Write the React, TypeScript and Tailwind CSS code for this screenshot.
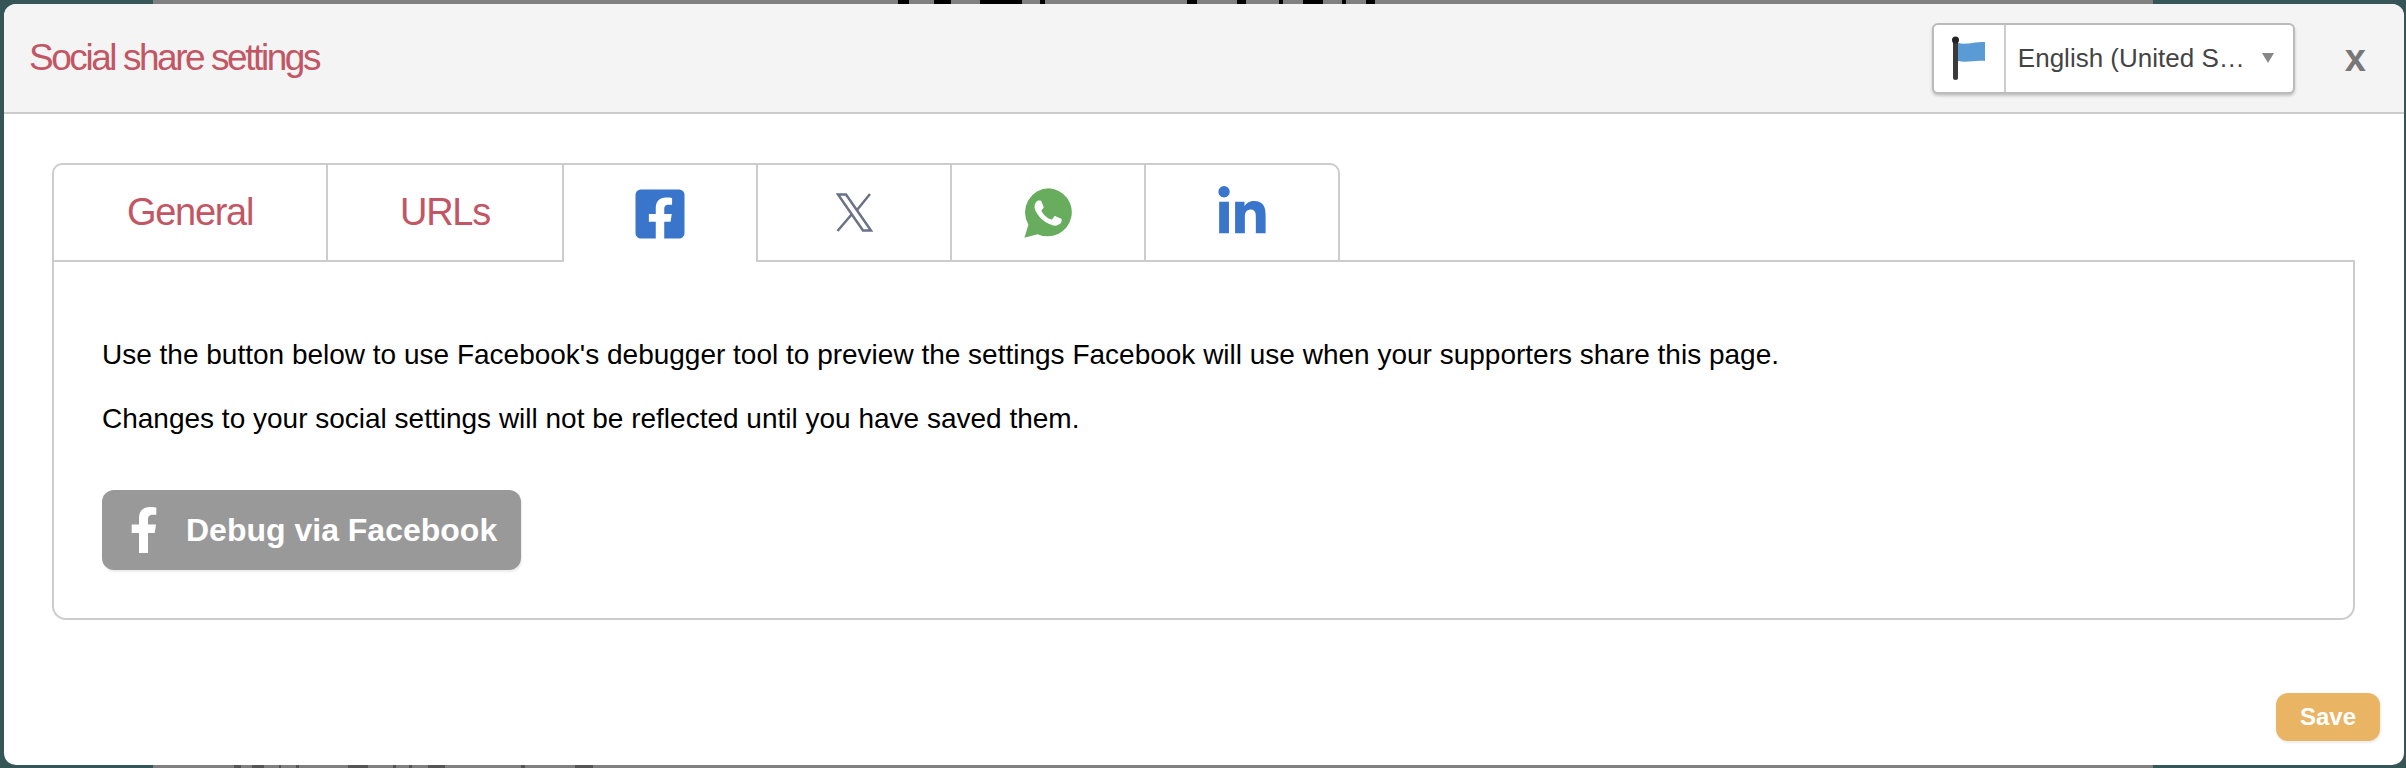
import { FaFacebookF, FaFacebookSquare, FaLinkedinIn } from 'react-icons/fa';

const arial = 'font-["Liberation_Sans",Arial,sans-serif]';

// slivers of the page text that show above and below the modal: [left, width]
const topBits = [[898, 11], [934, 17], [980, 42], [1040, 5], [1187, 10], [1237, 9], [1279, 4], [1303, 20], [1342, 4], [1366, 9]];
const bottomBits = [[234, 7], [252, 12], [279, 2], [296, 3], [348, 20], [393, 3], [409, 3], [428, 17], [521, 4], [575, 18]];

function Flag() {
  return (
    <svg width="34" height="44" viewBox="0 0 34 44">
      <path d="M6 7c8 2 15-1 27-1v19c-10-1-18 2-27 0z" fill="#5a9bd5" />
      <rect x="1" y="2" width="5" height="42" rx="2.5" fill="#3a3a3a" />
      <circle cx="3.5" cy="4" r="3.5" fill="#222" />
    </svg>
  );
}

function XLogo() {
  return (
    <svg width="37" height="39" viewBox="0 0 37 39" fill="none" stroke="#6b7287" strokeWidth="2.5">
      <path d="M2 1.5h8l25 36h-8z" />
      <path d="M34 1 21 17M1.500 38 16 21" />
    </svg>
  );
}

function WhatsappLogo() {
  return (
    <svg width="54" height="54" viewBox="0 0 24 24">
      <path d="M12.500 1a10.700 10.700 0 0 0-9.200 16.200L1.500 23l5.900-1.600A10.700 10.700 0 1 0 12.500 1z" fill="#68ad5e" />
      <path
        d="M17.470 14.380c-.3-.15-1.760-.87-2.030-.97-.27-.1-.47-.15-.67.15-.2.3-.77.97-.94 1.170-.17.2-.35.22-.64.07-.3-.15-1.260-.46-2.390-1.470-.88-.79-1.480-1.760-1.650-2.060-.17-.3-.02-.46.13-.6.13-.14.3-.35.45-.52.15-.17.2-.3.3-.5.1-.2.05-.37-.03-.52-.07-.15-.67-1.610-.92-2.210-.24-.58-.49-.5-.67-.51h-.57c-.2 0-.52.07-.79.37-.27.3-1.040 1.020-1.040 2.480 0 1.460 1.070 2.880 1.210 3.070.15.2 2.100 3.200 5.080 4.490.71.3 1.260.49 1.690.62.71.23 1.360.2 1.870.12.57-.09 1.760-.72 2.010-1.420.25-.7.25-1.290.17-1.410-.07-.13-.27-.2-.57-.35z"
        fill="#fff"
      />
    </svg>
  );
}

function Tab({ children, active, first, last }: { children: React.ReactNode; active?: boolean; first?: boolean; last?: boolean }) {
  return (
    <div
      className={
        'flex h-full items-center justify-center border-t-2 border-l-2 border-[#ccc] ' +
        (active ? '' : 'border-b-2 ') +
        (first ? 'rounded-tl-[10px] ' : '') +
        (last ? 'border-r-2 rounded-tr-[10px] ' : '')
      }
    >
      {children}
    </div>
  );
}

export default function App() {
  return (
    <div className={`relative h-[768px] w-full overflow-hidden bg-[#355557] pt-1 pb-[3px] pl-1 pr-[2px] ${arial}`}>
      {/* page behind the modal */}
      <div className="absolute inset-y-0 left-[153px] w-[2000px] bg-[#808080]" />
      {topBits.map(([left, width]) => (
        <div key={left} className="absolute top-0 h-1 bg-black" style={{ left, width }} />
      ))}
      {bottomBits.map(([left, width]) => (
        <div key={left} className="absolute bottom-0 h-[3px] bg-[#555]" style={{ left, width }} />
      ))}

      <div className="relative flex h-full flex-col overflow-hidden rounded-[12px] bg-white">
        <header className="flex h-[110px] shrink-0 items-center justify-between border-b-2 border-[#ccc] bg-[#f4f4f4] pl-[25px] pr-[38px]">
          <h1 className="text-[37px] tracking-[-2.45px] text-[#c25664]">Social share settings</h1>
          <div className="flex items-center">
            <div className="flex h-[71px] w-[363px] rounded-[6px] border-2 border-[#bbb] bg-white shadow-[0_2px_3px_rgba(0,0,0,0.2)]">
              <div className="flex w-[72px] items-center justify-center border-r-2 border-[#ccc]">
                <Flag />
              </div>
              <div className="flex flex-1 items-center justify-between pl-[12px] pr-[19px] text-[26px] text-[#444]">
                <span>English (United S…</span>
                <span className="h-0 w-0 border-x-[6px] border-t-[10px] border-x-transparent border-t-[#888]" />
              </div>
            </div>
            <span className="ml-[50px] text-[38px] font-bold text-[#777]">x</span>
          </div>
        </header>

        <main className="flex-1 pl-[48px] pr-[49px] pt-[49px]">
          <div className="flex h-[99px]">
            <div className="flex h-full">
              <div className="w-[274px]">
                <Tab first>
                  <span className="text-[38px] tracking-[-1.3px] text-[#c25664]">General</span>
                </Tab>
              </div>
              <div className="w-[236px]">
                <Tab>
                  <span className="text-[38px] tracking-[-1.3px] text-[#c25664]">URLs</span>
                </Tab>
              </div>
              <div className="w-[194px]">
                <Tab active>
                  <FaFacebookSquare className="text-[56px] text-[#3a75cc]" />
                </Tab>
              </div>
              <div className="w-[194px]">
                <Tab>
                  <XLogo />
                </Tab>
              </div>
              <div className="w-[194px]">
                <Tab>
                  <WhatsappLogo />
                </Tab>
              </div>
              <div className="w-[196px]">
                <Tab last>
                  <FaLinkedinIn className="text-[54px] text-[#3a75cc]" />
                </Tab>
              </div>
            </div>
            <div className="flex-1 border-b-2 border-[#ccc]" />
          </div>
          <div className="-mt-[2px] rounded-b-[14px] border-2 border-t-0 border-[#ccc] px-[48px] pt-[74px] pb-[48px] text-[28px] text-black">
            <p>Use the button below to use Facebook's debugger tool to preview the settings Facebook will use when your supporters share this page.</p>
            <p className="mt-[22px]">Changes to your social settings will not be reflected until you have saved them.</p>
            <button className="mt-[50px] flex h-[80px] w-[419px] items-center rounded-[12px] bg-[#999] pl-[19px] text-[32px] font-bold text-white shadow-[1px_2px_2px_rgba(0,0,0,0.08)]">
              <FaFacebookF className="text-[46px]" />
              <span className="ml-[19px]">Debug via Facebook</span>
            </button>
          </div>
        </main>

        <div className="flex justify-end px-[24px] pb-[24px]">
          <button className="flex h-[48px] w-[104px] items-center justify-center rounded-[12px] bg-[#e9b464] text-[24px] font-bold text-white shadow-[1px_2px_2px_rgba(0,0,0,0.08)]">
            Save
          </button>
        </div>
      </div>
    </div>
  );
}
